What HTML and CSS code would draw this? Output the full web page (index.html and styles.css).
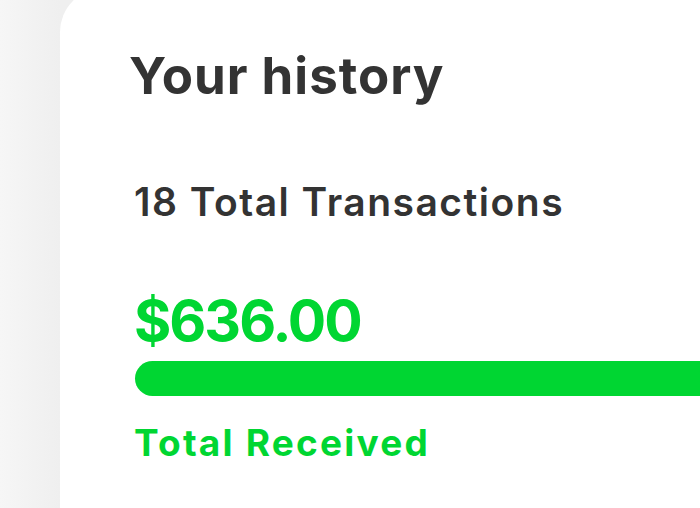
FILE: index.html
```html
<!DOCTYPE html>
<html>
<head>
<meta charset="utf-8">
<link rel="stylesheet" href="styles.css">
</head>
<body>
<main class="card">
  <h1 class="title">Your history</h1>
  <p class="count">18 Total Transactions</p>
  <div class="amount">$636.00</div>
  <div class="bar"></div>
  <p class="label">Total Received</p>
</main>
</body>
</html>
```
FILE: styles.css
```css
html, body {
  margin: 0;
  height: 100%;
  overflow: hidden;
}
body {
  background: linear-gradient(90deg, #f6f6f6 0%, #efefef 60px);
  font-family: Inter, "Noto Sans", sans-serif;
  color: #333333;
  padding-left: 60px;
  box-sizing: border-box;
}
.card {
  background: #ffffff;
  margin-top: -12px;
  height: 540px;
  border-top-left-radius: 44px;
  padding: 58px 0 0 69px;
  box-sizing: border-box;
  display: flex;
  flex-direction: column;
  overflow: hidden;
}
.title {
  margin: 0;
  font-size: 51px;
  font-weight: 700;
  line-height: 60px;
  letter-spacing: 1px;
}
.count {
  margin: 73px 0 0 5px;
  font-size: 39px;
  font-weight: 600;
  line-height: 46px;
  letter-spacing: 1.5px;
}
.amount {
  margin: 64px 0 0 5px;
  font-size: 57px;
  font-weight: 700;
  line-height: 64px;
  letter-spacing: -2px;
  color: #00d632;
}
.bar {
  margin: 8px 0 0 6px;
  height: 35px;
  background: #00d632;
  border-radius: 18px 0 0 18px;
}
.label {
  margin: 25px 0 0 5px;
  font-size: 37px;
  font-weight: 700;
  line-height: 44px;
  letter-spacing: 2.2px;
  color: #00d632;
}
```
